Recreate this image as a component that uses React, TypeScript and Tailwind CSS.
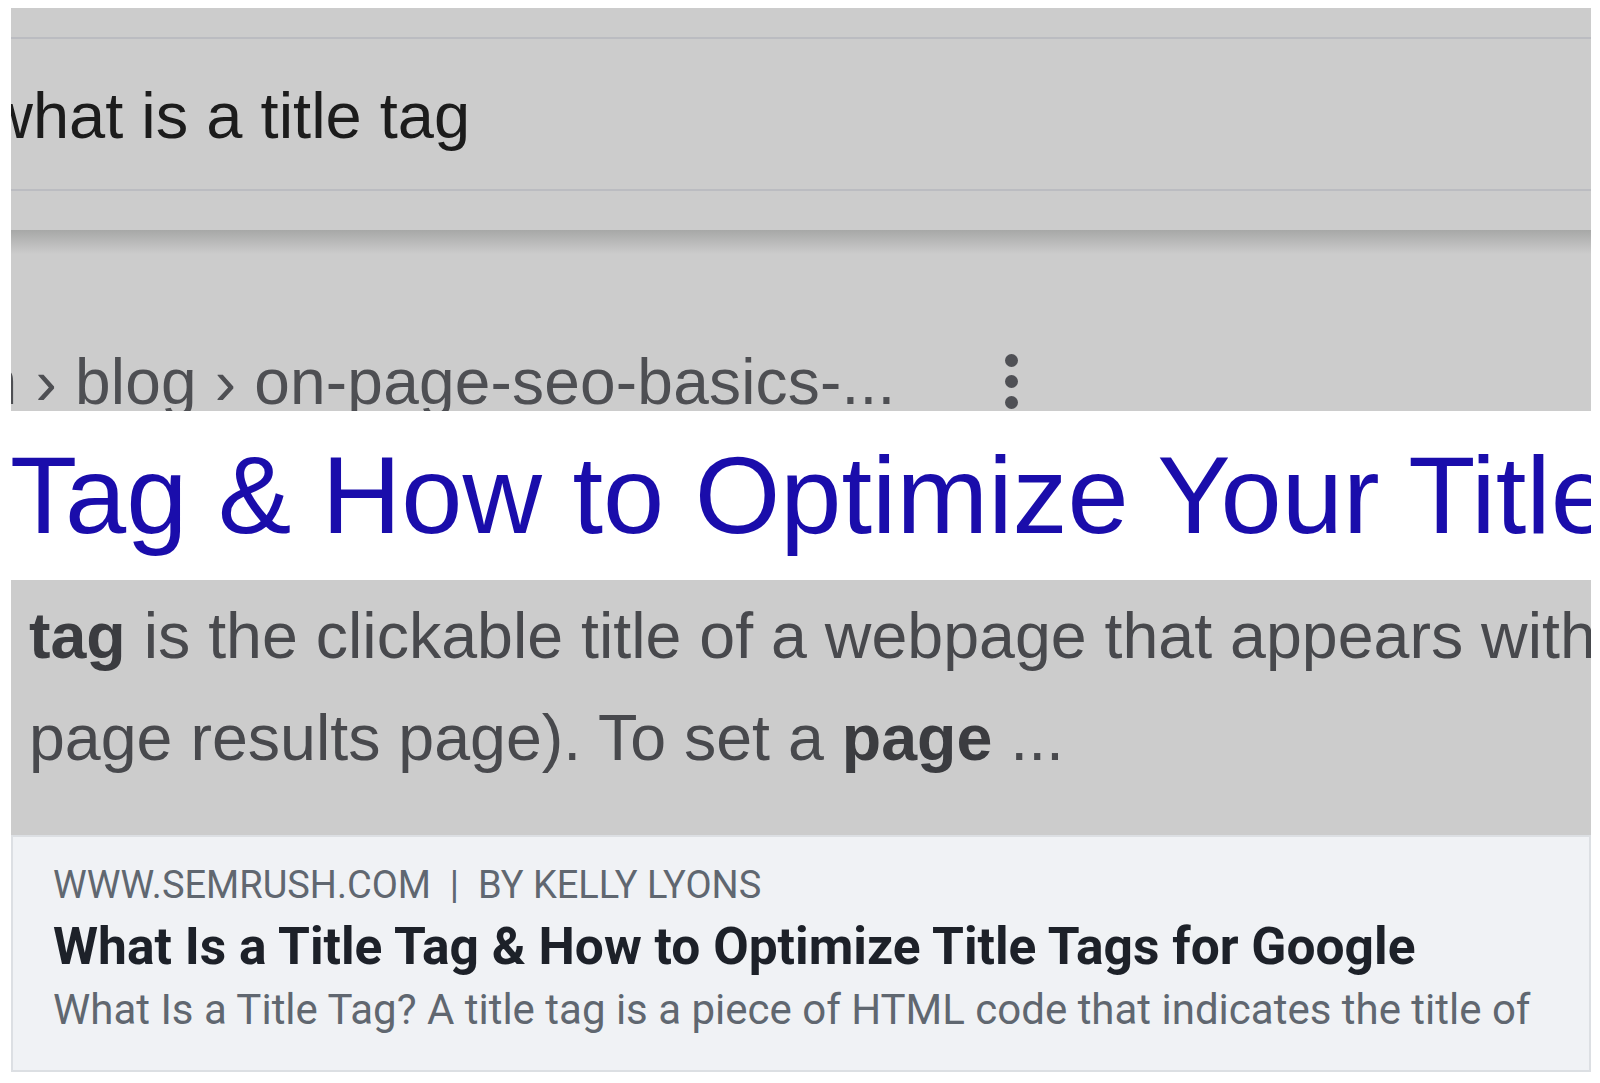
const serpFont = "font-['Liberation_Sans',Arial,sans-serif]";
const cardFont = "font-['Roboto','Liberation_Sans',sans-serif]";

const App = () => {
  return (
    <div className="min-h-screen bg-white pt-2 pl-[11px]">
      <div className="w-[1580px]">
        {/* ── Search bar (zoomed phone screenshot) ── */}
        <div className="bg-[#cccccc]">
          <div className="h-[29px]" />
          <div className="h-[2px] bg-[#bbbcc1]" />
          <div className="h-[150px] overflow-hidden pt-[44px]">
            <p
              className={`${serpFont} -ml-[25px] whitespace-nowrap text-[65px] leading-none text-[#1c1c1c]`}
            >
              what is a title tag
            </p>
          </div>
          <div className="h-[2px] bg-[#bbbcc1]" />
          <div className="h-[39px]" />
          <div className="h-[24px] bg-gradient-to-b from-[#a7a8a7] to-[#cccccc]" />

          {/* Breadcrumb */}
          <div className="flex h-[157px] overflow-hidden pt-[96px]">
            <p
              className={`${serpFont} -ml-[47px] whitespace-nowrap text-[64px] leading-none tracking-[0.2px] text-[#4e4f53]`}
            >
              m › blog › on-page-seo-basics-...
            </p>
            <div className="ml-[110px] flex flex-col gap-[8px] pt-[4px]">
              <span className="h-[13px] w-[13px] rounded-full bg-[#4f5055]" />
              <span className="h-[13px] w-[13px] rounded-full bg-[#4f5055]" />
              <span className="h-[13px] w-[13px] rounded-full bg-[#4f5055]" />
            </div>
          </div>
        </div>

        {/* ── Highlighted title ── */}
        <div className="h-[169px] overflow-hidden bg-white pt-[29px]">
          <p
            className={`${serpFont} -ml-[1px] whitespace-nowrap text-[110px] leading-none text-[#1a0dab]`}
          >
            Tag &amp; How to Optimize Your Title Tags
          </p>
        </div>

        {/* ── Snippet ── */}
        <div
          className={`${serpFont} h-[255px] overflow-hidden bg-[#cccccc] pl-[18px] pt-[5px] text-[64.5px] leading-[102px] text-[#48494d]`}
        >
          <p className="whitespace-nowrap">
            <b className="text-[#3b3c40]">tag</b> is the clickable title of a
            webpage that appears within
          </p>
          <p className="whitespace-nowrap">
            page results page). To set a <b className="text-[#3b3c40]">page</b> ...
          </p>
        </div>

        {/* ── Link preview card ── */}
        <div
          className={`${cardFont} h-[237px] border-2 border-[#dcdfe3] bg-[#f0f2f5] pl-[40px] pt-[29px]`}
        >
          <p className="whitespace-nowrap text-[38px] leading-none text-[#606770]">
            WWW.SEMRUSH.COM&nbsp;&nbsp;|&nbsp;&nbsp;BY KELLY LYONS
          </p>
          <p className="mt-[17px] whitespace-nowrap text-[51.5px] font-bold leading-none text-[#1d2129]">
            What Is a Title Tag &amp; How to Optimize Title Tags for Google
          </p>
          <p className="mt-[16px] whitespace-nowrap text-[42px] leading-none text-[#606770]">
            What Is a Title Tag? A title tag is a piece of HTML code that
            indicates the title of
          </p>
        </div>
      </div>
    </div>
  );
};

export default App;
